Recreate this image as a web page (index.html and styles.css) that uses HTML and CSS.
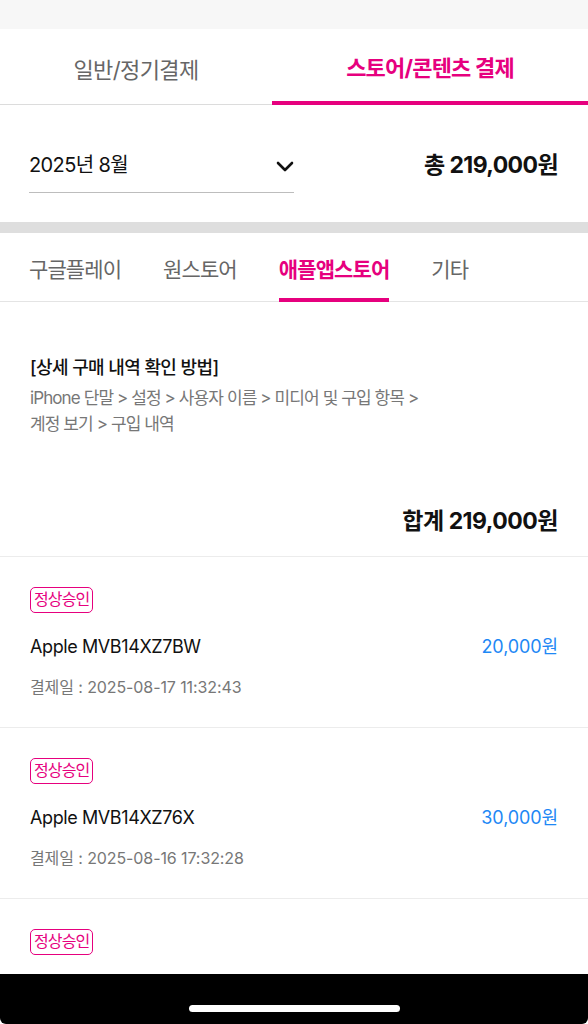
FILE: index.html
```html
<!DOCTYPE html>
<html lang="ko">
  <head>
    <meta charset="UTF-8" />
    <title>결제내역</title>
    <link rel="stylesheet" href="styles.css">
  </head>
  <body>
    <div class="status"></div>

    <nav class="main-tabs">
      <div class="main-tab">일반/정기결제</div>
      <div class="main-tab active">스토어/콘텐츠 결제</div>
    </nav>

    <section class="period">
      <div class="month-select">
        <span>2025년 8월</span>
        <svg width="18" height="11" viewBox="0 0 18 11">
          <polyline points="2,2 9,9 16,2" fill="none" stroke="#111" stroke-width="2.6" stroke-linecap="round" stroke-linejoin="round" />
        </svg>
      </div>
      <div class="grand-total">총 219,000원</div>
    </section>

    <div class="band"></div>

    <nav class="store-tabs">
      <div class="store-tab">구글플레이</div>
      <div class="store-tab">원스토어</div>
      <div class="store-tab active">애플앱스토어</div>
      <div class="store-tab">기타</div>
    </nav>

    <section class="guide">
      <h2>[상세 구매 내역 확인 방법]</h2>
      <p>iPhone 단말 &gt; 설정 &gt; 사용자 이름 &gt; 미디어 및 구입 항목 &gt;<br />계정 보기 &gt; 구입 내역</p>
    </section>

    <div class="sum">합계 219,000원</div>

    <ul class="history">
      <li class="item">
        <span class="badge">정상승인</span>
        <div class="item-row">
          <span class="item-name">Apple MVB14XZ7BW</span>
          <span class="item-price">20,000원</span>
        </div>
        <div class="item-date">결제일 : 2025-08-17 11:32:43</div>
      </li>
      <li class="item">
        <span class="badge">정상승인</span>
        <div class="item-row">
          <span class="item-name">Apple MVB14XZ76X</span>
          <span class="item-price">30,000원</span>
        </div>
        <div class="item-date">결제일 : 2025-08-16 17:32:28</div>
      </li>
      <li class="item">
        <span class="badge">정상승인</span>
      </li>
    </ul>

    <div class="home-bar"><span></span></div>
  </body>
</html>
```

FILE: styles.css
```css
body {
  margin: 0;
  background: #fff;
  font-family: Inter, "Noto Sans CJK KR", sans-serif;
  color: #111;
}
.status {
  height: 29px;
  background: #f7f7f7;
}
.main-tabs {
  display: flex;
}
.main-tab {
  height: 76px;
  box-sizing: border-box;
  display: flex;
  align-items: center;
  justify-content: center;
  font-size: 22px;
  letter-spacing: -0.6px;
  color: #666;
  border-bottom: 1px solid #dcdcdc;
  width: 272px;
  padding-top: 2px;
}
.main-tab.active {
  flex: 1;
  color: #e6007e;
  font-weight: 700;
  letter-spacing: -0.8px;
  border-bottom: 4px solid #e6007e;
}
.period {
  display: flex;
  justify-content: space-between;
  align-items: flex-start;
  padding: 45px 30px 29px 29px;
}
.month-select {
  width: 265px;
  display: flex;
  align-items: center;
  justify-content: space-between;
  font-size: 20px;
  letter-spacing: -0.6px;
  line-height: 30px;
  padding-bottom: 12px;
  border-bottom: 1px solid #bdbdbd;
}
.month-select svg {
  margin-top: 2px;
}
.grand-total {
  font-size: 23px;
  font-weight: 700;
  letter-spacing: -0.6px;
  line-height: 30px;
}
.band {
  height: 11px;
  background: #dedede;
}
.store-tabs {
  display: flex;
  gap: 42px;
  padding: 0 29px;
  border-bottom: 1px solid #e4e4e4;
}
.store-tab {
  height: 69px;
  box-sizing: border-box;
  margin-bottom: -1px;
  padding-top: 5px;
  display: flex;
  align-items: center;
  font-size: 21px;
  letter-spacing: -0.9px;
  color: #666;
  border-bottom: 4px solid transparent;
}
.store-tab.active {
  color: #e6007e;
  font-weight: 700;
  border-bottom-color: #e6007e;
}
.guide {
  padding: 54px 30px 0;
}
.guide h2 {
  margin: 0;
  font-size: 18px;
  font-weight: 500;
  letter-spacing: -0.6px;
  line-height: 24px;
}
.guide p {
  margin: 5px 0 0;
  font-size: 17px;
  letter-spacing: -0.9px;
  line-height: 26px;
  color: #777;
}
.sum {
  padding: 69px 30px 20px;
  text-align: right;
  font-size: 23px;
  font-weight: 700;
  letter-spacing: -0.5px;
  line-height: 30px;
  border-bottom: 1px solid #ececec;
}
.history {
  list-style: none;
  margin: 0;
  padding: 0;
}
.item {
  padding: 30px 30px 28px;
  border-bottom: 1px solid #ececec;
}
.badge {
  display: inline-block;
  height: 26px;
  box-sizing: border-box;
  padding: 0 3px;
  border: 1.5px solid #e6007e;
  border-radius: 5px;
  font-size: 16px;
  letter-spacing: -0.9px;
  line-height: 23px;
  color: #e6007e;
  vertical-align: top;
}
.item-row {
  display: flex;
  justify-content: space-between;
  margin-top: 22px;
  font-size: 18px;
  letter-spacing: -0.4px;
  line-height: 24px;
}
.item-price {
  color: #1e88f5;
  letter-spacing: -0.1px;
}
.item-date {
  margin-top: 16px;
  font-size: 16px;
  letter-spacing: -0.1px;
  line-height: 24px;
  color: #777;
}
.home-bar {
  position: fixed;
  left: 0;
  right: 0;
  bottom: 0;
  height: 50px;
  background: #000;
  border-radius: 0 0 6px 6px;
  display: flex;
  justify-content: center;
}
.home-bar span {
  width: 211px;
  height: 7px;
  margin-top: 31px;
  border-radius: 4px;
  background: #fff;
}
```
